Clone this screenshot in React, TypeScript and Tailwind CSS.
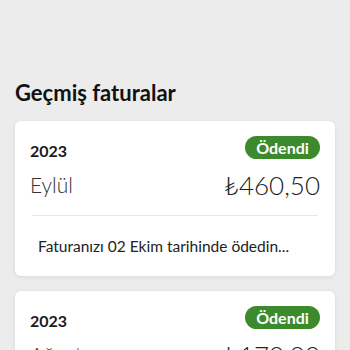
import React from 'react'

type Bill = {
  year: string
  month: string
  amount: string
  note?: string
}

const BILLS: Bill[] = [
  { year: '2023', month: 'Eylül', amount: '₺460,50', note: 'Faturanızı 02 Ekim tarihinde ödedin...' },
  { year: '2023', month: 'Ağustos', amount: '₺170,00', note: 'Faturanızı 02 Eylül tarihinde ödedin...' },
]

function BillCard({ bill }: { bill: Bill }) {
  return (
    <div className="bg-white rounded-[6px] shadow-[0_1px_4px_rgba(0,0,0,0.08)] pt-[15px] px-[15px]">
      <div className="flex items-center justify-between h-[23px]">
        <span className="text-[16px] font-bold text-[#1a1a1a] leading-none pt-[7px]">{bill.year}</span>
        <span className="h-[23px] w-[75px] rounded-full bg-[#3c8a2b] text-white text-[16px] font-bold flex items-center justify-center leading-none">
          Ödendi
        </span>
      </div>
      <div className="flex items-center justify-between mt-[11px] h-[30px]">
        <span className="text-[21px] font-light text-[#333]">{bill.month}</span>
        <span className="text-[26px] font-light text-[#222]">{bill.amount}</span>
      </div>
      <div className="mt-[15px] mx-[2px] border-t border-[#e6e6e6]" />
      <div className="pl-[8px] pt-[20px] pb-[20px] text-[15.5px] leading-[20px] text-[#222]">
        {bill.note}
      </div>
    </div>
  )
}

export default function App() {
  return (
    <div className="h-[350px] w-[350px] overflow-hidden bg-[#ececec] px-[15px] pt-[79px]" style={{ fontFamily: 'Lato, "Noto Sans", sans-serif' }}>
      <h1 className="text-[22px] font-bold leading-[28px] text-[#111] mb-[14px]">Geçmiş faturalar</h1>
      <div className="flex flex-col gap-[15px]">
        {BILLS.map((b, i) => (
          <BillCard key={i} bill={b} />
        ))}
      </div>
    </div>
  )
}
